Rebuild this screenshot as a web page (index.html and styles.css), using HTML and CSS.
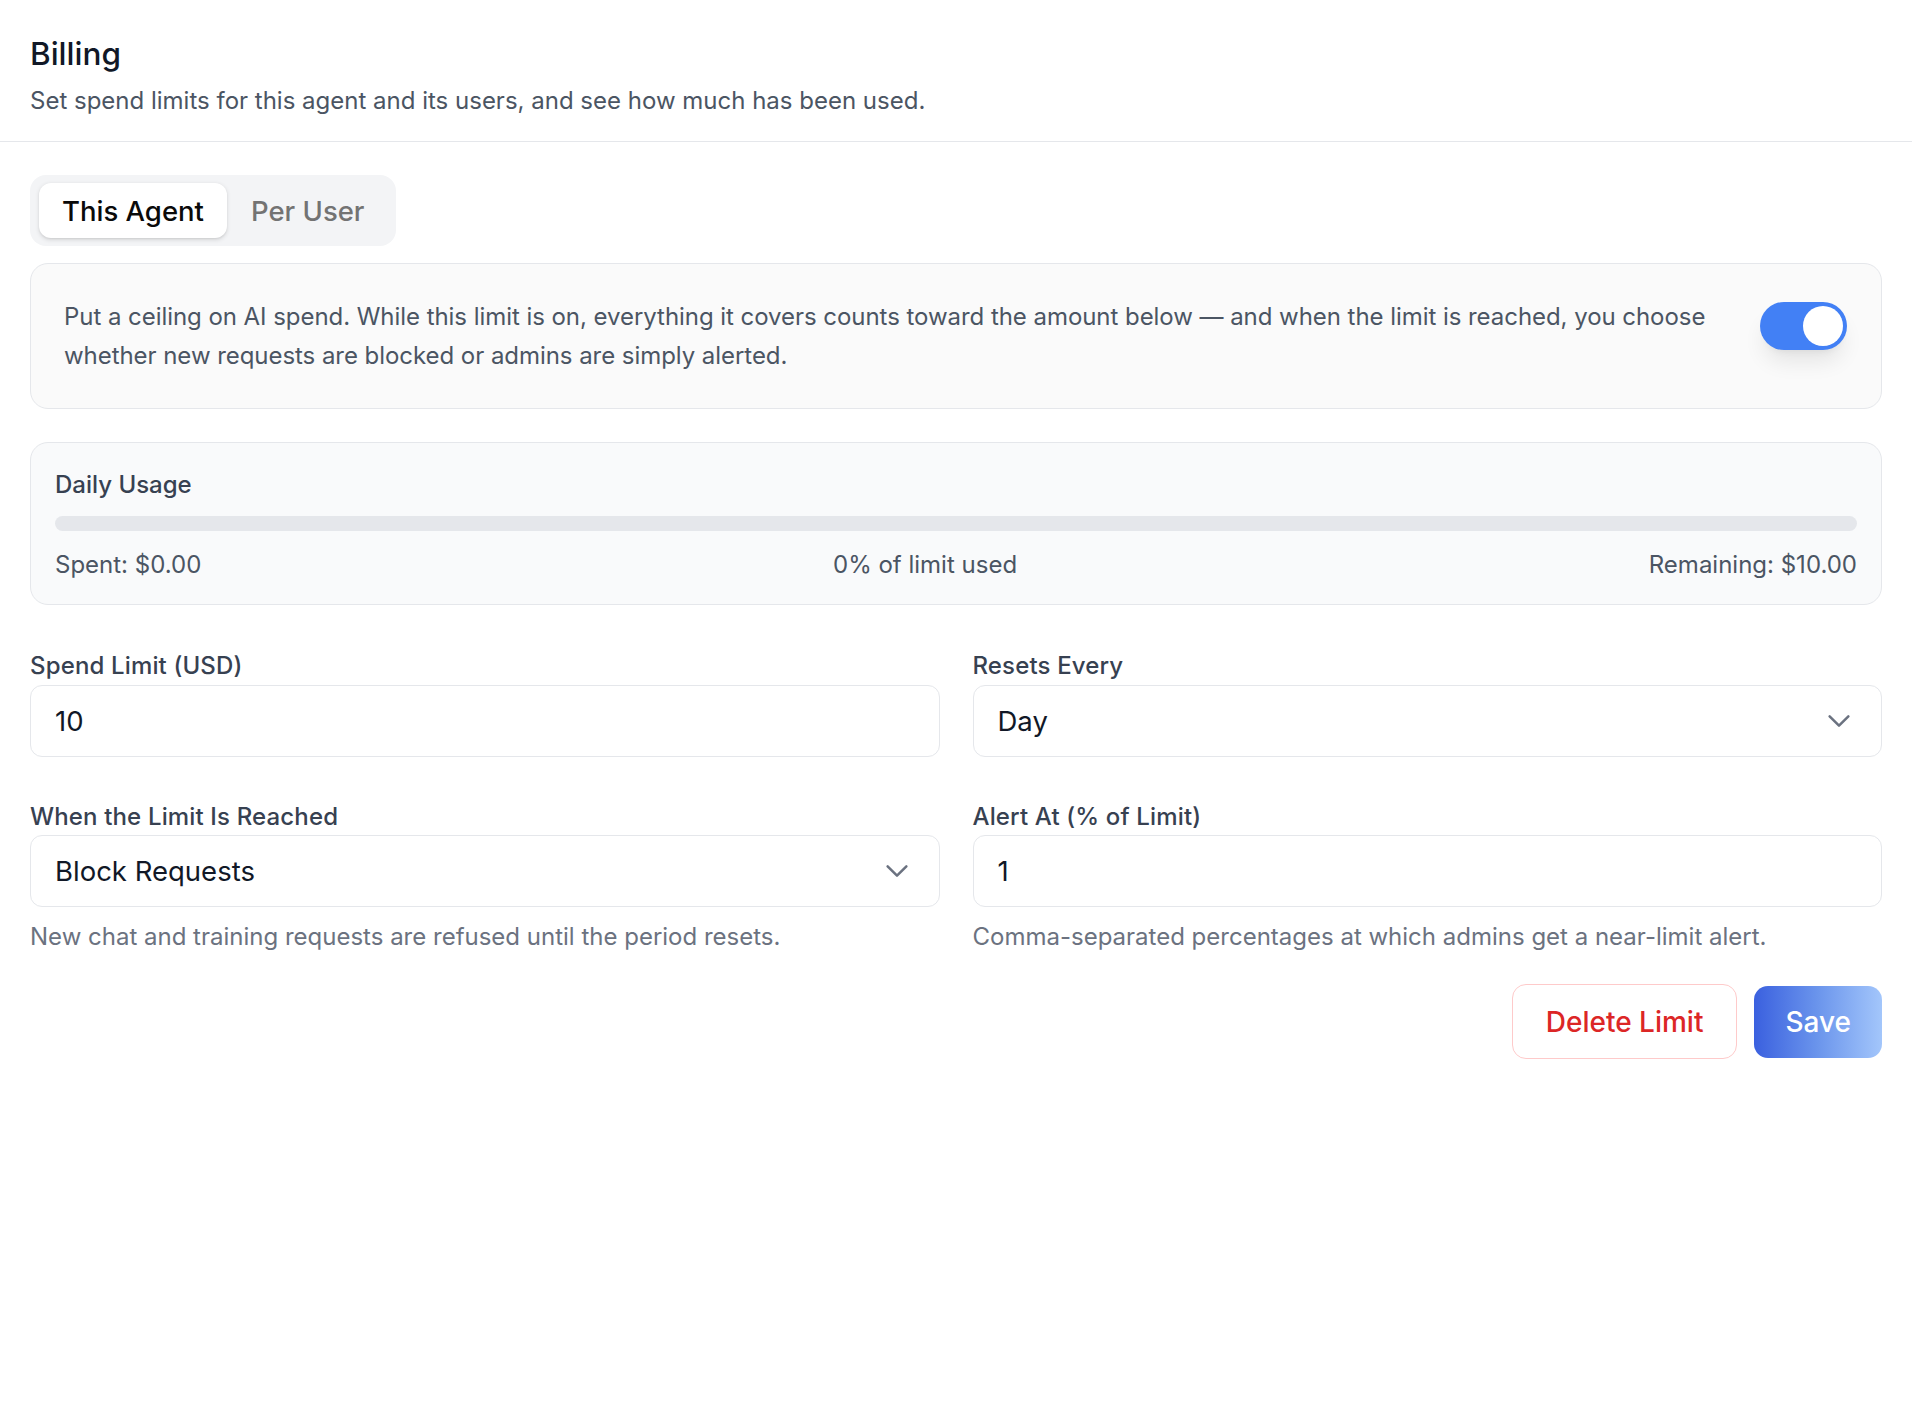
FILE: index.html
```html
<!DOCTYPE html>
<html lang="en">
<head>
<meta charset="utf-8">
<title>Billing</title>
<link rel="stylesheet" href="styles.css">
</head>
<body>
<header class="page-header">
  <h1 class="title">Billing</h1>
  <p class="subtitle">Set spend limits for this agent and its users, and see how much has been used.</p>
</header>
<main class="content">
  <div class="tabs">
    <div class="tab tab-active">This Agent</div>
    <div class="tab">Per User</div>
  </div>

  <section class="card intro-card">
    <p class="intro-text">Put a ceiling on AI spend. While this limit is on, everything it covers counts toward the amount below — and when the limit is reached, you choose whether new requests are blocked or admins are simply alerted.</p>
    <div class="toggle"><span class="knob"></span></div>
  </section>

  <section class="card usage-card">
    <div class="usage-title">Daily Usage</div>
    <div class="bar"><div class="bar-fill" style="width:0%"></div></div>
    <div class="usage-row">
      <span>Spent: $0.00</span>
      <span>0% of limit used</span>
      <span>Remaining: $10.00</span>
    </div>
  </section>

  <div class="form-grid">
    <div class="field">
      <label class="label">Spend Limit (USD)</label>
      <div class="control">10</div>
    </div>
    <div class="field">
      <label class="label">Resets Every</label>
      <div class="control select">
        <span>Day</span>
        <svg class="chev" viewBox="0 0 24 24" fill="none" stroke="currentColor" stroke-width="2" stroke-linecap="round" stroke-linejoin="round"><path d="M19.5 8.25l-7.5 7.5-7.5-7.5"/></svg>
      </div>
    </div>
    <div class="field">
      <label class="label">When the Limit Is Reached</label>
      <div class="control select">
        <span>Block Requests</span>
        <svg class="chev" viewBox="0 0 24 24" fill="none" stroke="currentColor" stroke-width="2" stroke-linecap="round" stroke-linejoin="round"><path d="M19.5 8.25l-7.5 7.5-7.5-7.5"/></svg>
      </div>
      <p class="help">New chat and training requests are refused until the period resets.</p>
    </div>
    <div class="field">
      <label class="label">Alert At (% of Limit)</label>
      <div class="control">1</div>
      <p class="help">Comma-separated percentages at which admins get a near-limit alert.</p>
    </div>
  </div>

  <div class="actions">
    <button class="btn btn-delete">Delete Limit</button>
    <button class="btn btn-save">Save</button>
  </div>
</main>
</body>
</html>
```

FILE: styles.css
```css
* { box-sizing: border-box; }
html, body { margin: 0; padding: 0; background: #ffffff; }
body {
  font-family: Inter, "Noto Sans", "Liberation Sans", sans-serif;
  color: #111827;
  -webkit-font-smoothing: antialiased;
}
.page-header {
  padding: 31px 30px 22px;
  border-bottom: 1.5px solid #e5e7eb;
}
.title {
  margin: 0;
  font-size: 31.5px;
  line-height: 45px;
  font-weight: 500;
  color: #111827;
}
.subtitle {
  margin: 7px 0 0;
  font-size: 24px;
  line-height: 36px;
  color: #4b5563;
}
.content {
  padding: 33px 30px 0;
}
.tabs {
  display: inline-flex;
  background: #f3f4f6;
  border-radius: 16px;
  padding: 8px 8px 8px 8.5px;
}
.tab {
  height: 55px;
  padding: 0 23.5px;
  display: flex;
  align-items: center;
  font-size: 27.5px;
  font-weight: 500;
  color: #737373;
  border-radius: 12px;
}
.tab-active {
  background: #ffffff;
  color: #0a0a0a;
  box-shadow: 0 1.5px 4px rgba(0,0,0,0.12), 0 1px 2px rgba(0,0,0,0.06);
}
.card {
  border: 1.5px solid #e5e7eb;
  border-radius: 18px;
}
.intro-card {
  margin-top: 17px;
  background: #fafafa;
  padding: 33px 34px 33px 33px;
  display: flex;
  align-items: flex-start;
  justify-content: space-between;
  gap: 40px;
}
.intro-text {
  margin: 0;
  font-size: 24px;
  line-height: 39px;
  color: #4b5563;
  max-width: 1660px;
  letter-spacing: -0.05px;
}
.toggle {
  flex: none;
  width: 87px;
  height: 48px;
  margin-top: 4.5px;
  border-radius: 24px;
  background: #4280f5;
  padding: 4px;
  display: flex;
  justify-content: flex-end;
  box-shadow: 0 15px 22px -4px rgba(0,0,0,0.09), 0 6px 9px -6px rgba(0,0,0,0.08);
}
.knob {
  width: 40px;
  height: 40px;
  border-radius: 50%;
  background: #ffffff;
}
.usage-card {
  margin-top: 33px;
  background: #f9fafb;
  padding: 24px 24px 21.5px;
}
.usage-title {
  font-size: 24px;
  line-height: 36px;
  font-weight: 500;
  color: #374151;
}
.bar {
  margin-top: 12.5px;
  height: 15px;
  border-radius: 8px;
  background: #e5e7eb;
  overflow: hidden;
}
.bar-fill {
  height: 100%;
  background: #3b82f6;
}
.usage-row {
  margin-top: 16px;
  display: flex;
  justify-content: space-between;
  font-size: 24px;
  line-height: 36px;
  color: #4b5563;
}
.form-grid {
  margin-top: 44px;
  display: grid;
  grid-template-columns: 1fr 1fr;
  column-gap: 33px;
  row-gap: 43px;
  align-items: start;
}
.field {
  display: flex;
  flex-direction: column;
}
.label {
  font-size: 24px;
  line-height: 33px;
  font-weight: 500;
  color: #374151;
  letter-spacing: 0.15px;
}
.control {
  margin-top: 2.5px;
  height: 72px;
  border: 1.5px solid #e5e7eb;
  border-radius: 12px;
  background: #ffffff;
  padding: 0 24px;
  display: flex;
  align-items: center;
  font-size: 27.5px;
  color: #111827;
}
.select {
  justify-content: space-between;
  padding-right: 27px;
}
.chev {
  width: 30px;
  height: 30px;
  color: #6b7280;
}
.help {
  margin: 13px 0 0;
  font-size: 24px;
  line-height: 33px;
  color: #6b7280;
}
.actions {
  margin-top: 31px;
  display: flex;
  justify-content: flex-end;
  align-items: center;
  gap: 17px;
}
.btn {
  font-family: inherit;
  font-size: 28px;
  font-weight: 500;
  border-radius: 14px;
  cursor: pointer;
}
.btn-delete {
  height: 75px;
  padding: 0 33px;
  background: #ffffff;
  color: #dc2626;
  border: 1.5px solid #fecaca;
}
.btn-save {
  height: 72px;
  padding: 0 31px;
  border: none;
  color: #ffffff;
  background: linear-gradient(90deg, #3a60df 0%, #6b95ec 50%, #a3c6fb 100%);
}
```
